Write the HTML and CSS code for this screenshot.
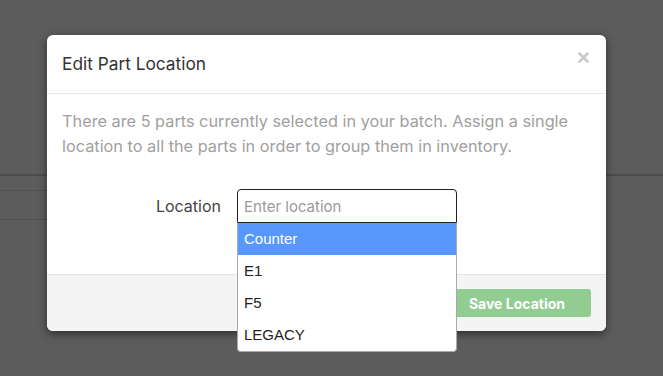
FILE: index.html
```html
<!DOCTYPE html>
<html lang="en">
<head>
    <meta charset="UTF-8">
    <meta name="viewport" content="width=device-width, initial-scale=1.0">
    <title>Edit Part Location</title>
    <link rel="stylesheet" href="styles.css">
</head>
<body>
    <div class="page">
        <div class="page-head"></div>
        <div class="page-row"></div>
        <div class="page-row tall"></div>
    </div>

    <div class="modal">
        <div class="modal-header">
            <h4 class="modal-title">Edit Part Location</h4>
            <button class="close" aria-label="Close">
                <svg width="11" height="11" viewBox="0 0 11 11">
                    <path d="M1.5 1.5 L9.5 9.5 M9.5 1.5 L1.5 9.5" stroke="#c9c9c9" stroke-width="2.6" stroke-linecap="round"/>
                </svg>
            </button>
        </div>
        <div class="modal-body">
            <p class="intro">There are 5 parts currently selected in your batch. Assign a single location to all the parts in order to group them in inventory.</p>
            <div class="form-row">
                <label for="location">Location</label>
                <div class="field">
                    <input type="text" id="location" placeholder="Enter location">
                    <ul class="dropdown">
                        <li class="active">Counter</li>
                        <li>E1</li>
                        <li>F5</li>
                        <li>LEGACY</li>
                    </ul>
                </div>
            </div>
        </div>
        <div class="modal-footer">
            <button class="btn-save" disabled>Save Location</button>
        </div>
    </div>
</body>
</html>
```

FILE: styles.css
```css
body {
    margin: 0;
    background: #5c5c5c;
    font-family: Inter, "Open Sans", sans-serif;
    height: 376px;
    overflow: hidden;
    position: relative;
}

.page-head {
    height: 174px;
    border-bottom: 2px solid #4c4c4c;
}

.page-row {
    width: 300px;
    height: 14px;
    border-bottom: 1px solid #505050;
}

.page-row.tall {
    height: 28px;
}

.modal {
    position: absolute;
    top: 35px;
    left: 47px;
    width: 559px;
    background: #fff;
    border-radius: 6px;
    box-shadow: 0 3px 9px rgba(0, 0, 0, 0.5);
}

.modal-header {
    display: flex;
    justify-content: space-between;
    align-items: flex-start;
    padding: 15px;
    border-bottom: 1px solid #e8e8e8;
}

.modal-title {
    margin: 0;
    font-size: 17.3px;
    font-weight: 400;
    line-height: 28px;
    color: #333;
}

.close {
    border: none;
    background: none;
    padding: 0;
    margin: 2px 2px 0 0;
    cursor: pointer;
    line-height: 0;
}

.modal-body {
    padding: 15px 15px 51px;
}

.intro {
    margin: 0 0 30px;
    font-size: 16.3px;
    line-height: 25px;
    color: #a0a0a0;
}

.form-row {
    display: flex;
    align-items: center;
    gap: 16px;
}

.form-row label {
    width: 159px;
    text-align: right;
    font-size: 16px;
    color: #444;
}

.field {
    position: relative;
    width: 220px;
}

.field input {
    box-sizing: border-box;
    width: 220px;
    height: 34px;
    margin: 0;
    padding: 0 6px;
    border: 1px solid #222;
    border-radius: 4px 4px 0 0;
    font-family: inherit;
    font-size: 15px;
    color: #333;
    outline: none;
}

.field input::placeholder {
    color: #9a9a9a;
}

.dropdown {
    position: absolute;
    top: 100%;
    left: 0;
    box-sizing: border-box;
    width: 220px;
    margin: 0;
    padding: 0;
    list-style: none;
    background: #fff;
    border: 1px solid #aaa;
    border-top: none;
    border-radius: 0 0 4px 4px;
    z-index: 2;
}

.dropdown li {
    height: 32px;
    line-height: 32px;
    padding: 0 6px;
    font-family: "Liberation Sans", Arial, sans-serif;
    font-size: 15px;
    color: #222;
}

.dropdown li.active {
    background: #5897fb;
    color: #fff;
}

.modal-footer {
    display: flex;
    justify-content: flex-end;
    padding: 14px 15px;
    background: #f4f4f4;
    border-top: 1px solid #e5e5e5;
    border-radius: 0 0 6px 6px;
}

.btn-save {
    height: 28px;
    padding: 0 26px;
    border: none;
    border-radius: 3px;
    background: #91cd91;
    color: #fff;
    font-family: inherit;
    font-size: 14px;
    font-weight: 700;
}
```
